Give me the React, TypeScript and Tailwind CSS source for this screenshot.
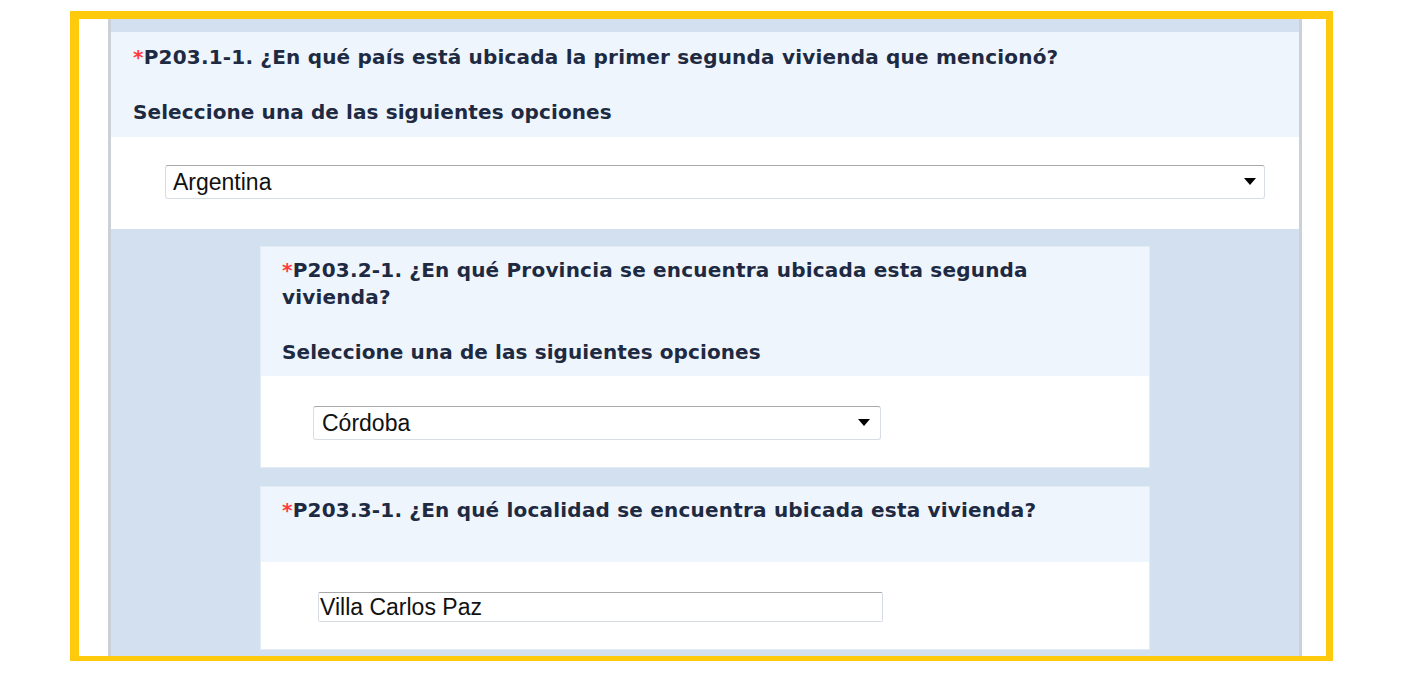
import React from "react";

function Arrow() {
  return (
    <svg width="12" height="7" viewBox="0 0 12 7" className="shrink-0">
      <path d="M0 0H12L6 7Z" fill="#000" />
    </svg>
  );
}

function Star() {
  return <span className="text-[#ff3b3b]">*</span>;
}

export default function App() {
  return (
    <div className="w-[1410px] h-[688px] bg-white pl-[70px] pt-[11px] overflow-hidden">
      <div className="w-[1263px] h-[650px] border-[#ffc90e] border-l-[9px] border-t-[8px] border-r-[7px] border-b-[5px] flex bg-white">
        <div className="w-[29px] shrink-0" />
        <div className="w-[1194px] shrink-0 h-full border-x-[3px] border-[#cbd1d7] bg-[#d3e0f0] pt-[13px] overflow-hidden font-['DejaVu_Sans',Verdana,sans-serif] text-[#1e2a42]">
          {/* Question 1 */}
          <div className="bg-[#eef5fd] px-[22px] pt-[12px] pb-[10px] text-[20px] leading-[27.5px] font-bold tracking-[0.2px]">
            <p>
              <Star />
              P203.1-1. ¿En qué país está ubicada la primer segunda vivienda que mencionó?
            </p>
            <p className="mt-[27.5px] tracking-[0.1px]">Seleccione una de las siguientes opciones</p>
          </div>
          <div className="bg-white pl-[54px] pt-[28px] pb-[30px]">
            <div className="w-[1100px] h-[34px] flex items-center justify-between border border-[#d8dde4] border-t-[#a9a9a9] rounded-[3px] bg-white pl-[7px] pr-[8px] font-['Liberation_Sans',Arial,sans-serif] text-[23px] leading-[26px] text-[#111]">
              <span>Argentina</span>
              <Arrow />
            </div>
          </div>

          {/* Nested group */}
          <div className="flex flex-col gap-[18px] pt-[17px] px-[149px]">
            <div className="border border-[#e3ebf5]">
              <div className="bg-[#eef5fd] px-[21px] pt-[10px] pb-[9px] text-[20px] leading-[27.5px] font-bold tracking-[0.2px]">
                <p>
                  <Star />
                  P203.2-1. ¿En qué Provincia se encuentra ubicada esta segunda
                  <br />
                  vivienda?
                </p>
                <p className="mt-[27.5px] tracking-[0.1px]">Seleccione una de las siguientes opciones</p>
              </div>
              <div className="bg-white pl-[52px] pt-[30px] pb-[27px]">
                <div className="w-[568px] h-[34px] flex items-center justify-between border border-[#d8dde4] border-t-[#a9a9a9] rounded-[3px] bg-white pl-[8px] pr-[10px] font-['Liberation_Sans',Arial,sans-serif] text-[23px] leading-[26px] text-[#111]">
                  <span>Córdoba</span>
                  <Arrow />
                </div>
              </div>
            </div>

            <div className="border border-[#e3ebf5]">
              <div className="bg-[#eef5fd] px-[21px] pt-[10px] pb-[10px] text-[20px] leading-[27.5px] font-bold tracking-[0.2px]">
                <p>
                  <Star />
                  P203.3-1. ¿En qué localidad se encuentra ubicada esta vivienda?
                </p>
                <p className="h-[27.5px]" />
              </div>
              <div className="bg-white pl-[57px] pt-[30px] pb-[27px]">
                <div className="w-[565px] h-[30px] flex items-center border border-[#d8dde4] border-t-[#a9a9a9] rounded-[2px] bg-white pl-[1px] font-['Liberation_Sans',Arial,sans-serif] text-[23px] leading-[26px] text-[#111]">
                  <span>Villa Carlos Paz</span>
                </div>
              </div>
            </div>
          </div>
        </div>
        <div className="flex-1" />
      </div>
    </div>
  );
}
